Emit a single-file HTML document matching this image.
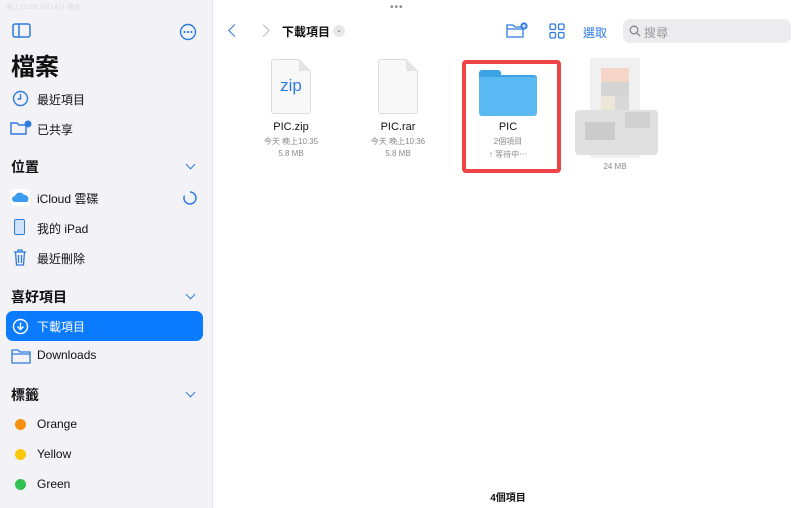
<!DOCTYPE html>
<html><head><meta charset="utf-8"><style>
*{margin:0;padding:0;box-sizing:border-box}
body{width:800px;height:508px;overflow:hidden;background:#fff;font-family:"Liberation Sans","Noto Sans CJK TC",sans-serif;position:relative;color:#111}
.sb{position:absolute;left:0;top:0;width:213px;height:508px;background:#f2f2f7;border-right:1px solid #e2e2e6}
.a{position:absolute}
.it{position:absolute;left:37px;font-size:12px;color:#111}
.hd{position:absolute;left:11px;font-size:14px;font-weight:bold;color:#111}
.chev{position:absolute;left:187px;width:7px;height:7px;border-right:1.5px solid #2f7be0;border-bottom:1.5px solid #2f7be0;transform:rotate(45deg)}
.dot{position:absolute;left:15px;width:11px;height:11px;border-radius:50%}
.cap{position:absolute;font-size:11px;text-align:center;width:100px;color:#111}
.sm{position:absolute;font-size:8px;color:#8a8a8e;text-align:center;width:100px}
.doc{position:absolute;width:40px;height:55px;background:#f8f8f8;border:1px solid #ddd;border-radius:3px}
.doc:after{content:"";position:absolute;right:-1px;top:-1px;width:12px;height:12px;background:linear-gradient(225deg,#fff 50%,#e4e4e4 50%)}
</style></head><body>
<div class="sb">
<div class="a" style="left:6px;top:2px;font-size:7px;color:#ddd">晚上10:59 2月14日 週五</div>
<svg class="a" style="left:12px;top:23px" width="20" height="16" viewBox="0 0 20 16"><rect x="1" y="1" width="17" height="13" rx="2" fill="none" stroke="#2f7be0" stroke-width="1.5"/><line x1="7" y1="1" x2="7" y2="14" stroke="#2f7be0" stroke-width="1.5"/></svg>
<svg class="a" style="left:179px;top:23px" width="18" height="18" viewBox="0 0 18 18"><circle cx="9" cy="9" r="7.5" fill="none" stroke="#2f7be0" stroke-width="1.4"/><circle cx="5.5" cy="9" r="1.1" fill="#2f7be0"/><circle cx="9" cy="9" r="1.1" fill="#2f7be0"/><circle cx="12.5" cy="9" r="1.1" fill="#2f7be0"/></svg>
<div class="a" style="left:11px;top:47px;font-size:24px;font-weight:bold">檔案</div>
<svg class="a" style="left:12px;top:90px" width="17" height="17" viewBox="0 0 17 17"><circle cx="8.5" cy="8.5" r="7" fill="none" stroke="#2f7be0" stroke-width="1.4"/><path d="M8.5 4v5H5.5" fill="none" stroke="#2f7be0" stroke-width="1.4"/></svg>
<div class="it" style="top:91px">最近項目</div>
<svg class="a" style="left:10px;top:120px" width="22" height="16" viewBox="0 0 22 16"><path d="M1 3h6l2 2h7v9H1z" fill="none" stroke="#2f7be0" stroke-width="1.4"/><circle cx="18" cy="4" r="3.5" fill="#2f7be0"/></svg>
<div class="it" style="top:121px">已共享</div>
<div class="hd" style="top:157px">位置</div><div class="chev" style="top:161px"></div>
<div class="a" style="left:11px;top:189px;width:19px;height:17px;background:#fff;border-radius:3px"></div>
<svg class="a" style="left:12px;top:192px" width="18" height="11" viewBox="0 0 18 11"><path d="M3 10a3 3 0 0 1 0-6 5 5 0 0 1 9-1 4 4 0 0 1 3 7z" fill="#3a9bf0"/></svg>
<div class="it" style="top:190px">iCloud 雲碟</div>
<svg class="a" style="left:182px;top:190px" width="16" height="16" viewBox="0 0 16 16"><path d="M8 2a6 6 0 1 1-5.5 3.5" fill="none" stroke="#2f7be0" stroke-width="1.5"/></svg>
<div class="a" style="left:14px;top:219px;width:11px;height:16px;border:1.5px solid #2f7be0;border-radius:2px;background:#cfe3fb"></div>
<div class="it" style="top:220px">我的 iPad</div>
<svg class="a" style="left:13px;top:249px" width="14" height="17" viewBox="0 0 14 17"><path d="M1 3h12M5 3V1h4v2M2.5 3l1 13h7l1-13M5.5 6v8M8.5 6v8" fill="none" stroke="#2f7be0" stroke-width="1.3"/></svg>
<div class="it" style="top:250px">最近刪除</div>
<div class="hd" style="top:287px">喜好項目</div><div class="chev" style="top:291px"></div>
<div class="a" style="left:6px;top:311px;width:197px;height:30px;background:#0a7aff;border-radius:7px"></div>
<svg class="a" style="left:12px;top:318px" width="17" height="17" viewBox="0 0 17 17"><circle cx="8.5" cy="8.5" r="7" fill="none" stroke="#fff" stroke-width="1.4"/><path d="M8.5 4.5v7M5.5 8.5l3 3 3-3" fill="none" stroke="#fff" stroke-width="1.4"/></svg>
<div class="it" style="top:318px;color:#fff">下載項目</div>
<svg class="a" style="left:11px;top:348px" width="20" height="16" viewBox="0 0 20 16"><path d="M1 2h6l2 2h10v11H1z M1 6h18" fill="none" stroke="#2f7be0" stroke-width="1.3"/></svg>
<div class="it" style="top:348px">Downloads</div>
<div class="hd" style="top:385px">標籤</div><div class="chev" style="top:389px"></div>
<div class="dot" style="top:419px;background:#f7900f"></div><div class="it" style="top:417px">Orange</div>
<div class="dot" style="top:449px;background:#fcc60a"></div><div class="it" style="top:447px">Yellow</div>
<div class="dot" style="top:479px;background:#33c053"></div><div class="it" style="top:477px">Green</div>
</div>
<div class="a" style="left:390px;top:2px;font-size:10px;color:#888;letter-spacing:1px">•••</div>
<div class="a" style="left:230px;top:26px;width:9px;height:9px;border-left:1.8px solid #2f7be0;border-bottom:1.8px solid #2f7be0;transform:rotate(45deg)"></div>
<div class="a" style="left:259px;top:26px;width:9px;height:9px;border-right:1.5px solid #bbb;border-top:1.5px solid #bbb;transform:rotate(45deg)"></div>
<div class="a" style="left:282px;top:23px;font-size:12px;font-weight:bold">下載項目</div>
<div class="a" style="left:333px;top:25px;width:12px;height:12px;border-radius:50%;background:#e8e8ea;font-size:7px;color:#666;text-align:center;line-height:12px">⌄</div>
<svg class="a" style="left:506px;top:22px" width="22" height="17" viewBox="0 0 22 17"><path d="M1 3h6l2 2h8v10H1z M1 7h16" fill="none" stroke="#2f7be0" stroke-width="1.3"/><circle cx="18" cy="4" r="3.6" fill="#2f7be0"/><path d="M18 2v4M16 4h4" stroke="#fff" stroke-width="1"/></svg>
<svg class="a" style="left:549px;top:23px" width="16" height="16" viewBox="0 0 16 16" fill="none" stroke="#2f7be0" stroke-width="1.3"><rect x="1" y="1" width="5.5" height="5.5" rx="1.2"/><rect x="9.5" y="1" width="5.5" height="5.5" rx="1.2"/><rect x="1" y="9.5" width="5.5" height="5.5" rx="1.2"/><rect x="9.5" y="9.5" width="5.5" height="5.5" rx="1.2"/></svg>
<div class="a" style="left:583px;top:24px;font-size:12px;color:#2f7be0">選取</div>
<div class="a" style="left:623px;top:19px;width:168px;height:24px;background:#ececee;border-radius:7px"></div>
<svg class="a" style="left:629px;top:25px" width="12" height="12" viewBox="0 0 12 12"><circle cx="5" cy="5" r="3.8" fill="none" stroke="#888" stroke-width="1.3"/><path d="M8 8l3 3" stroke="#888" stroke-width="1.3"/></svg>
<div class="a" style="left:644px;top:24px;font-size:12px;color:#999">搜尋</div>
<div class="doc" style="left:271px;top:59px"></div>
<div class="a" style="left:271px;top:76px;width:40px;text-align:center;font-size:17px;color:#2f7be0">zip</div>
<div class="cap" style="left:241px;top:121px">PIC.zip</div>
<div class="sm" style="left:241px;top:136px">今天 晚上10:35</div>
<div class="sm" style="left:241px;top:149px">5.8 MB</div>
<div class="doc" style="left:378px;top:59px"></div>
<div class="cap" style="left:348px;top:121px">PIC.rar</div>
<div class="sm" style="left:348px;top:136px">今天 晚上10:36</div>
<div class="sm" style="left:348px;top:149px">5.8 MB</div>
<div class="a" style="left:462px;top:60px;width:99px;height:113px;border:4px solid #ef4347;border-radius:4px"></div>
<div class="a" style="left:479px;top:70px;width:22px;height:8px;background:#3ba3e6;border-radius:3px 3px 0 0"></div>
<div class="a" style="left:479px;top:75px;width:58px;height:41px;background:#5ab8f2;border-radius:3px;border-top:2px solid #3ba3e6"></div>
<div class="cap" style="left:458px;top:121px">PIC</div>
<div class="sm" style="left:458px;top:136px">2個項目</div>
<div class="sm" style="left:458px;top:149px">↑ 等待中⋯</div>
<div class="a" style="left:590px;top:58px;width:50px;height:100px;background:#f0f0f0"></div>
<div class="a" style="left:601px;top:68px;width:28px;height:14px;background:#f4d5c8"></div>
<div class="a" style="left:601px;top:82px;width:28px;height:14px;background:#d4d4d4"></div>
<div class="a" style="left:601px;top:96px;width:14px;height:14px;background:#ece6d6"></div>
<div class="a" style="left:615px;top:96px;width:14px;height:14px;background:#d8d8d8"></div>
<div class="a" style="left:575px;top:110px;width:83px;height:45px;background:#e0e0e0;border-radius:4px"></div>
<div class="a" style="left:585px;top:122px;width:30px;height:18px;background:#cbcbcb"></div>
<div class="a" style="left:625px;top:112px;width:25px;height:16px;background:#d0d0d0"></div>
<div class="sm" style="left:565px;top:162px">24 MB</div>
<div class="a" style="left:458px;top:489px;width:100px;text-align:center;font-size:10px;font-weight:bold">4個項目</div>
</body></html>
